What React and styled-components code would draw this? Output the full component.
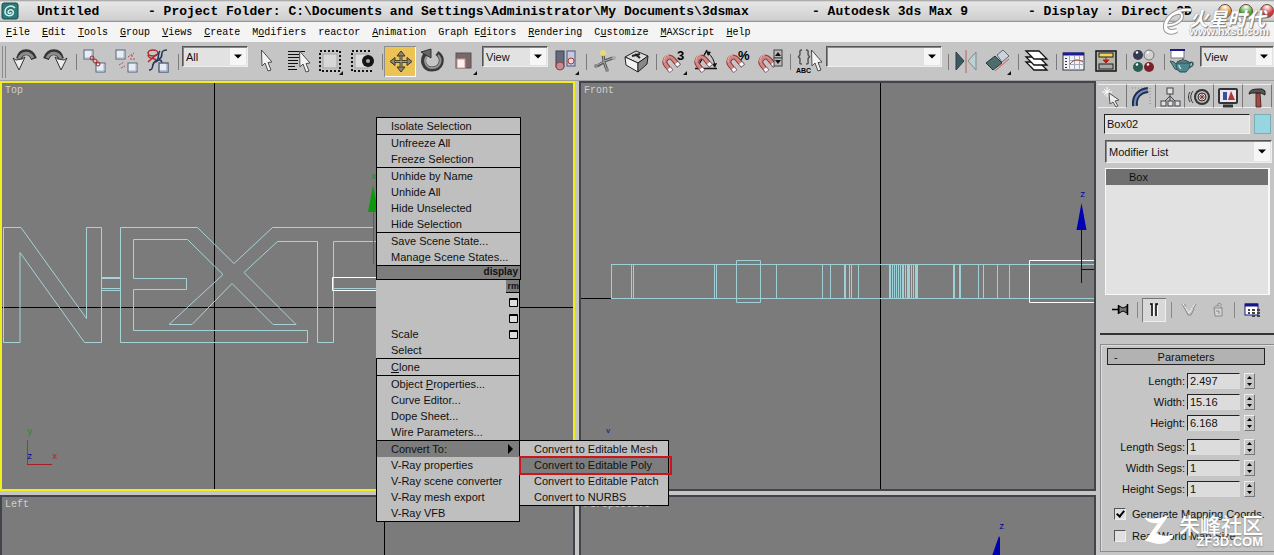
import { useState } from "react";
import styled, { createGlobalStyle } from "styled-components";

const MENUS = [
  ["", "F", "ile"],
  ["", "E", "dit"],
  ["", "T", "ools"],
  ["", "G", "roup"],
  ["", "V", "iews"],
  ["", "C", "reate"],
  ["M", "o", "difiers"],
  ["reactor", "", ""],
  ["", "A", "nimation"],
  ["Graph E", "d", "itors"],
  ["", "R", "endering"],
  ["C", "u", "stomize"],
  ["", "M", "AXScript"],
  ["", "H", "elp"],
];

const DISPLAY_QUAD = [
  ["Isolate Selection"],
  ["Unfreeze All", "Freeze Selection"],
  ["Unhide by Name", "Unhide All", "Hide Unselected", "Hide Selection"],
  ["Save Scene State...", "Manage Scene States..."],
];

const CONVERT_ITEMS = [
  "Convert to Editable Mesh",
  "Convert to Editable Poly",
  "Convert to Editable Patch",
  "Convert to NURBS",
];

const SIZES = [
  ["Length", "2.497"],
  ["Width", "15.16"],
  ["Height", "6.168"],
];

const SEGMENTS = [
  ["Length Segs", "1"],
  ["Width Segs", "1"],
  ["Height Segs", "1"],
];

// vertical edges of the extruded text seen from the front
const FRONT_EDGES = [
  611, 631, 633, 714, 716, 776, 822, 830, 844, 845, 849, 851, 858, 889, 890,
  892, 894, 896, 898, 900, 902, 903, 905, 907, 908, 909, 911, 913, 915, 916,
  917, 953, 954, 959, 960, 978, 983, 997, 1009,
];

const Magnet = () => (
  <g fill="none">
    <path d="M21 20l-6-7C11 8 4 14 8 19l5 6" stroke="#7c3a3a" strokeWidth="5" />
    <path d="M20 19l-5-6C11 8 4 14 8 19l4 5" stroke="#dc8580" strokeWidth="3" />
    <path d="M11 9C8 9 5 12 6 16" stroke="#f3bdb8" />
    <path d="M18.500 17l2.500 3M11 22.500l2.500 3" stroke="#777" strokeWidth="5" />
    <path d="M18.500 17l2 2.500M11 22.500l2 2.500" stroke="#fff" strokeWidth="3.500" />
  </g>
);

const UndoShape = () => (
  <>
    <path d="M26 13C23 4 13 4 11 13" fill="none" stroke="#333" strokeWidth="6" />
    <path d="M25 12C22 6 14 5 11 13" fill="none" stroke="#8b8b8b" strokeWidth="3" />
    <path d="M5 12l3 2 6-1 3-2-6 13z" fill="#eee" stroke="#333" />
  </>
);

const Node = ({ x, y }) => (
  <>
    <rect x={x} y={y} width="9" height="9" fill="#e6edf5" stroke="#596579" />
    <path d={`M${x + 1} ${y + 8}h7v-7`} fill="none" stroke="#a9b7cc" />
  </>
);

const Arrow = ({ x = 0, y = 0 }) => (
  <path
    transform={`translate(${x} ${y})`}
    d="M11.500 4l.5 16 3-3 3 8 3-1-3-7.500 4-.5z"
    fill="#f4f4f4"
    stroke="#4c4c4c"
  />
);

const Flyout = () => <path d="M29 25v4h-4z" fill="#111" />;

const ICONS = {
  undo: <UndoShape />,
  redo: (
    <g transform="translate(32 0) scale(-1 1)">
      <UndoShape />
    </g>
  ),
  link: (
    <>
      <Node x={6} y={4} />
      <Node x={18} y={17} />
      <g fill="none" stroke="#a32626">
        <circle cx="14" cy="12" r="2" />
        <circle cx="17" cy="15" r="2" />
        <circle cx="20" cy="18" r="2" />
      </g>
    </>
  ),
  unlink: (
    <>
      <path d="M18 11l6-4M20 13h6M9 19l5-3M11 22l4-2M22 9v3" stroke="#b04c4c" strokeDasharray="2 1" />
      <Node x={6} y={4} />
      <Node x={18} y={17} />
    </>
  ),
  bind: (
    <g fill="none" strokeWidth="1.5">
      <ellipse cx="11" cy="7" rx="5" ry="3" stroke="#b02828" />
      <path d="M6 9c1 6 8 1 9 7M15 8l-9 8" stroke="#b02828" />
      <path d="M25 4c-9 0-2 7-8 9M7 24c6 0 1-6 7-9 4-2 6-1 6 3M18 5c-3 3 0 8-4 11" stroke="#26345c" />
      <Node x={17} y={17} />
    </g>
  ),
  cursor: <Arrow />,
  byName: (
    <>
      <path d="M6 5.500h17M6 8.500h11M6 11.500h13M6 14.500h10M6 17.500h10M6 20.500h7M6 23.500h9" stroke="#111" />
      <Arrow x={6} y={1} />
    </>
  ),
  region: (
    <>
      <rect x="6" y="5" width="20" height="20" fill="none" stroke="#111" strokeWidth="2" strokeDasharray="2 2" />
      <rect x="9" y="8" width="14" height="14" fill="#d7d7d7" stroke="#a4a4a4" />
      <Flyout />
    </>
  ),
  crossing: (
    <>
      <path d="M24 5H6v20h20" fill="none" stroke="#111" strokeWidth="2" strokeDasharray="2 2" />
      <rect x="9" y="8" width="13" height="14" fill="#dcdcdc" stroke="#a4a4a4" />
      <circle cx="22" cy="15" r="6" fill="#151515" />
      <circle cx="22" cy="15" r="2" fill="#aaa" />
    </>
  ),
  move: (
    <>
      <path d="M17 9v13M10 15.500h14" stroke="#4b452e" strokeWidth="3" />
      <path d="M17 5l4 5h-8zM17 26l4-5h-8zM6 15.500l5-4v8zM28 15.500l-5-4v8z" fill="#8a8570" stroke="#3c3826" />
      <path d="M17 10v11M11 15.500h12" stroke="#a39c83" />
    </>
  ),
  rotate: (
    <>
      <path d="M21 7c8 6 4 16-5 16-8 0-11-9-6-15" fill="none" stroke="#3a3a3a" strokeWidth="5" />
      <path d="M22 9c5 5 2 13-6 13-6 0-9-7-5-12" fill="none" stroke="#949494" strokeWidth="2" />
      <path d="M5 6l10-3v9z" fill="#666" stroke="#333" />
    </>
  ),
  scale: (
    <>
      <rect x="8" y="7" width="15" height="15" fill="#78686b" stroke="#5b5053" />
      <rect x="9" y="13" width="8" height="9" fill="#fff0eb" stroke="#c59a94" />
      <Flyout />
    </>
  ),
  pivot: (
    <>
      <rect x="6" y="5" width="8" height="16" fill="#666b7c" stroke="#3c4152" />
      <circle cx="10" cy="20" r="4" fill="#c78b93" stroke="#8d3f4a" />
      <rect x="17" y="5" width="8" height="15" fill="#c3cbdc" stroke="#4a5580" />
      <circle cx="21" cy="15" r="3" fill="#f3d7d7" stroke="#ad3434" />
      <Flyout />
    </>
  ),
  manipulate: (
    <>
      <path d="M15 8l1 8-7 4M16 15l9-3M16 16l3 8" fill="none" stroke="#555" strokeWidth="3" />
      <path d="M15 8l1 8-7 3M16 15l9-3M16 16l3 8" fill="none" stroke="#aaa" />
      <circle cx="15" cy="7" r="3" fill="#e6dc73" />
      <circle cx="8" cy="20" r="2" fill="#888" />
      <circle cx="26" cy="12" r="2" fill="#aaa" />
      <circle cx="19" cy="24" r="2" fill="#888" />
    </>
  ),
  keyboard: (
    <g stroke="#222">
      <path d="M5 11l11-6 12 5-10 7z" fill="#ddd" />
      <path d="M5 11l13 6v9L6 19z" fill="#f4f4f4" />
      <path d="M18 17l10-7-1 8-9 8z" fill="#888" />
      <path d="M12 10l8-2M15 8l5 4" strokeWidth="2" />
    </g>
  ),
  snap3: (
    <>
      <Magnet />
      <text x="19" y="14">3</text>
      <Flyout />
    </>
  ),
  angle: (
    <>
      <path d="M5 22.500h22M8 20L17 4" fill="none" stroke="#111" strokeWidth="1.5" />
      <path d="M18 7c4 3 6 7 7 13" fill="none" stroke="#111" />
      <path d="M16 5l5 1-3 4zM22 18l5-1-2 5z" fill="#111" />
      <Magnet />
    </>
  ),
  percent: (
    <>
      <Magnet />
      <text x="16" y="14">%</text>
    </>
  ),
  spinner: (
    <>
      <Magnet />
      <rect x="20" y="4" width="8" height="8" fill="#bbb" stroke="#444" />
      <rect x="20" y="12" width="8" height="8" fill="#bbb" stroke="#444" />
      <path d="M21 10l3-4 3 4zM21 14h6l-3 4z" fill="#111" />
    </>
  ),
  named: (
    <>
      <g fill="none" stroke="#555" strokeWidth="1.5">
        <path d="M10 4c-3 0-2 2-2 4s-2 3-2 3 2 0 2 3-1 4 2 4M14 4c3 0 2 2 2 4s2 3 2 3-2 0-2 3 1 4-2 4" />
      </g>
      <text x="4" y="27" className="small">ABC</text>
      <Arrow x={8} />
    </>
  ),
  mirror: (
    <>
      <path d="M6 6l8 9-8 9z" fill="#3d5960" stroke="#2c3c40" />
      <path d="M26 6l-8 9 8 9z" fill="#bdd0d3" stroke="#7c8a8d" />
      <path d="M16 4v23" stroke="#b4645f" />
    </>
  ),
  align: (
    <>
      <path d="M4 17l9-7 7 7-9 7z" fill="#4c6c70" stroke="#263638" />
      <path d="M15 9l6-5 6 6-7 6z" fill="#ccd3dd" stroke="#62676e" />
      <path d="M13 25l14-12" stroke="#cf5c5c" />
      <Flyout />
    </>
  ),
  layers: (
    <g fill="#fff" stroke="#111" strokeWidth="1.3">
      <path d="M6 16h13l8 8H14z" />
      <path d="M6 11h13l8 8H14z" />
      <path d="M6 5h13l8 8H14z" />
    </g>
  ),
  curve: (
    <>
      <rect x="5" y="7" width="21" height="17" fill="#f2f2f2" stroke="#333a50" />
      <path d="M5 8h21" stroke="#1c1c9c" strokeWidth="3" />
      <path d="M11.500 9v15M11 14.500h15M11 18.500h15M16.500 10v14M21.500 10v14" stroke="#a4aabb" />
      <path d="M12 18c4-5 8-5 13-2" fill="none" stroke="#b23a3a" />
      <path d="M7 12.500h2M7 15.500h2M7 18.500h2M7 21.500h2" stroke="#333" />
    </>
  ),
  schematic: (
    <>
      <rect x="6" y="5" width="20" height="20" fill="#b5b5a9" stroke="#111" strokeWidth="1.5" />
      <rect x="9" y="7" width="14" height="4" fill="#efd55a" stroke="#222" />
      <rect x="9" y="18" width="14" height="5" fill="#a9a9a9" stroke="#222" />
      <path d="M16 11v5M13 14h6l-3 3z" fill="#b22020" stroke="#b22020" />
    </>
  ),
  material: (
    <>
      <circle cx="10" cy="9" r="5" fill="#333a52" />
      <circle cx="21" cy="9" r="5" fill="#d2d2d2" stroke="#777" />
      <circle cx="10" cy="21" r="5" fill="#285e54" />
      <circle cx="21" cy="21" r="5" fill="#7e2027" />
      <path d="M8 7l2-1M19 7l2-1M8 19l2-1M19 19l2-1" stroke="#fff" strokeWidth="2" />
    </>
  ),
  render: (
    <>
      <rect x="5" y="4" width="13" height="8" fill="#fff" stroke="#777" />
      <path d="M4 4h15" stroke="#1b1b90" strokeWidth="2" />
      <path d="M23 17c4-2 5 1 3 3l-3 2" fill="none" stroke="#2b545a" strokeWidth="1.5" />
      <path d="M11 19l-3-3-4-1 5 8 3 1z" fill="#5b939a" stroke="#2b545a" />
      <path d="M10 17h14c0 5-2 7-4 9h-6c-3-2-4-4-4-9z" fill="#4d868d" stroke="#274e54" />
      <path d="M11 16q6-4 12 0zM17 12v2" fill="#86b8bd" stroke="#274e54" />
      <path d="M13 19c0 2 1 3 2 4" fill="none" stroke="#b8dde0" strokeWidth="1.5" />
    </>
  ),
};

const TABS = {
  Create: (
    <>
      <path d="M9 2v10M4 7h10M6 4l6 6M12 4l-6 6" stroke="#fff" />
      <path d="M11 8l1 11 3-2 3 5 2-1-3-5 4-1z" fill="#eee" stroke="#555" />
    </>
  ),
  Modify: (
    <>
      <path d="M5 3h18v18" fill="none" stroke="#888" strokeDasharray="1 2" />
      <path d="M8 21C7 12 12 6 21 5" fill="none" stroke="#202d4e" strokeWidth="6" />
      <path d="M8 21C7 12 12 6 21 5" fill="none" stroke="#7390bd" strokeWidth="2" />
    </>
  ),
  Hierarchy: (
    <>
      <path d="M14 9v7M14 11l-6 6M14 11l6 6" stroke="#444" fill="none" />
      <g fill="#dce2e8" stroke="#444">
        <rect x="11" y="3" width="6" height="6" />
        <rect x="5" y="16" width="5" height="5" />
        <rect x="12" y="16" width="5" height="5" />
        <rect x="19" y="16" width="5" height="5" />
      </g>
    </>
  ),
  Motion: (
    <g fill="none" stroke="#333">
      <circle cx="17" cy="12" r="7" strokeWidth="2" fill="#bbb" />
      <circle cx="17" cy="12" r="4" fill="#eee" />
      <path d="M17 8v8M13 12h8M14 9l6 6M20 9l-6 6" stroke="#7c3b3b" />
      <path d="M8 6c-3 4-3 8 0 12M5 7c-2 3-2 7 0 10" />
    </g>
  ),
  Display: (
    <>
      <rect x="5" y="4" width="18" height="14" rx="1" fill="#e8e8f2" stroke="#343434" strokeWidth="2" />
      <path d="M9 7h4v8H9z" fill="#3c4f9b" />
      <path d="M14 15l3-9 4 9z" fill="#b63434" />
      <path d="M9 21h10" stroke="#343434" strokeWidth="3" />
    </>
  ),
  Utilities: (
    <>
      <path d="M13 8h4l1 14h-5z" fill="#a34a42" stroke="#542a26" />
      <path d="M6 9c1-5 5-5 13-5l3 2v4l-4-2H9z" fill="#555" stroke="#222" />
    </>
  ),
};

function ToolIcon({ name, active }) {
  return (
    <ToolButton type="button" aria-label={name} $active={active}>
      <svg width="32" height="31" viewBox="0 0 32 31">
        {ICONS[name]}
      </svg>
    </ToolButton>
  );
}

function DropDown({ label, value, width, tall }) {
  return (
    <DropWrap $width={width} $tall={tall}>
      <DropSelect aria-label={label} defaultValue={value}>
        <option>{value}</option>
      </DropSelect>
      <DropArrow viewBox="0 0 16 16" preserveAspectRatio="xMidYMid meet">
        <path d="M4 6h8l-4 4z" fill="#000" />
      </DropArrow>
    </DropWrap>
  );
}

function Spinner({ label, value }) {
  const id = label.replace(" ", "-").toLowerCase();
  return (
    <SpinnerRow>
      <label htmlFor={id}>{label}:</label>
      <NumberField id={id} defaultValue={value} />
      <Stepper>
        <StepButton type="button" aria-label={`${label} up`}>
          <svg width="5" height="3">
            <path d="M0 3h5L2.500 0z" />
          </svg>
        </StepButton>
        <StepButton type="button" aria-label={`${label} down`}>
          <svg width="5" height="3">
            <path d="M0 0h5L2.500 3z" />
          </svg>
        </StepButton>
      </Stepper>
    </SpinnerRow>
  );
}

function OptionBox() {
  return (
    <svg width="9" height="9">
      <path d="M.5.5h8v8h-8zM0 1.500h9" fill="#ddd" stroke="#000" />
    </svg>
  );
}

function Quads() {
  const [target, setTarget] = useState("Convert to Editable Poly");

  return (
    <QuadLayer>
      <Quad>
        {DISPLAY_QUAD.map((items) => (
          <QuadSection key={items[0]}>
            {items.map((item) => (
              <QuadItem key={item}>{item}</QuadItem>
            ))}
          </QuadSection>
        ))}
        <QuadTitle>display</QuadTitle>
      </Quad>
      <LowerQuad>
        <TransformHead>
          <span>rm</span>
        </TransformHead>
        <QuadSection $open>
          <QuadItem aria-label="Move">
            <i />
            <OptionBox />
          </QuadItem>
          <QuadItem aria-label="Rotate">
            <i />
            <OptionBox />
          </QuadItem>
          <QuadItem>
            Scale
            <OptionBox />
          </QuadItem>
          <QuadItem>Select</QuadItem>
        </QuadSection>
        <QuadSection>
          <QuadItem>
            <span>
              <u>C</u>lone
            </span>
          </QuadItem>
        </QuadSection>
        <QuadSection>
          <QuadItem>
            <span>
              Object <u>P</u>roperties...
            </span>
          </QuadItem>
          <QuadItem>Curve Editor...</QuadItem>
          <QuadItem>Dope Sheet...</QuadItem>
          <QuadItem>Wire Parameters...</QuadItem>
        </QuadSection>
        <QuadSection>
          <SubAnchor>
            <QuadItem $active>
              Convert To:
              <svg width="11" height="10">
                <path d="M1 0v10l5-5z" />
              </svg>
            </QuadItem>
            <SubMenu>
              {CONVERT_ITEMS.map((item) => (
                <SubRow key={item} $marked={item === target}>
                  <QuadItem $active={item === target} onClick={() => setTarget(item)}>
                    {item}
                  </QuadItem>
                </SubRow>
              ))}
            </SubMenu>
          </SubAnchor>
          <QuadItem>V-Ray properties</QuadItem>
          <QuadItem>V-Ray scene converter</QuadItem>
          <QuadItem>V-Ray mesh export</QuadItem>
          <QuadItem>V-Ray VFB</QuadItem>
        </QuadSection>
      </LowerQuad>
    </QuadLayer>
  );
}

function Viewports() {
  return (
    <ViewGrid>
      <Viewport $active>
        <ViewName>Top</ViewName>
        <Scene viewBox="2 83 571 406" preserveAspectRatio="xMinYMin slice">
          <path d="M214.500 80v420M0 307.500h580" stroke="#000" />
          <g fill="none" stroke="#a6d3d8">
            <path d="M3.500 227.500h17.500l65.500 91v-91h15v115h-17l-64.500-90v90h-16.500z" />
            <path d="M373 227.500H272.500L234 263.500l-36.500-36h-77v115h187v-12h-174v-41h53v-11h-53v-39h54l35.500 35-54 50h23l40-41 41 41h23l-52-52 33.500-31h40v101h16v-101H376" />
            <path d="M101 277.500h19M101 278.500h19M101 288.500h19M101 290.500h19M333 288.500h44" />
          </g>
          <path d="M377 277.500h-44.500v13h44.500" fill="none" stroke="#fff" />
          <path d="M373 185l5 27h-10z" fill="#0a9a0a" />
          <path d="M373.500 212v52" stroke="#1c8a1c" />
          <path d="M27.500 440v25" stroke="#18801d" />
          <path d="M27 464.500h25" stroke="#a81c24" />
          <text x="27" y="434" fill="#18901d">y</text>
          <text x="27" y="459" fill="#000099">z</text>
          <text x="52" y="459" fill="#b01c24">x</text>
          <text x="371" y="179" fill="#18901d">x</text>
        </Scene>
      </Viewport>
      <Viewport>
        <ViewName>Front</ViewName>
        <Scene viewBox="581 83 513 406" preserveAspectRatio="xMinYMin slice">
          <path d="M880.500 80v420M580 298.500h31" stroke="#000" />
          <g fill="none" stroke="#9fd0d6">
            <path d="M1096 264.500H611M611 298.500h485" />
            <path d="M736.500 260.500h24v42h-24z" />
            {FRONT_EDGES.map((x) => (
              <path key={x} d={`M${x}.5 264v34`} />
            ))}
          </g>
          <path d="M1100 260.500h-70.500v42h70.500" fill="none" stroke="#fff" />
          <path d="M1081.500 203l5 27h-10z" fill="#0000b4" />
          <path d="M1081.500 230v53M1081 269.500h15" stroke="#0000a0" />
          <text x="1080" y="197" fill="#0000a0">z</text>
          <text x="606" y="433" fill="#0000a0" className="faint">v</text>
        </Scene>
      </Viewport>
      <Viewport $clipped>
        <ViewName>Left</ViewName>
        <Scene viewBox="2 497 571 58" preserveAspectRatio="xMinYMin slice">
          <path d="M384.500 490v400" stroke="#000" />
        </Scene>
      </Viewport>
      <Viewport $clipped>
        <ViewName>Perspective</ViewName>
        <Scene viewBox="581 497 513 58" preserveAspectRatio="xMinYMin slice">
          <path d="M999 536l1 2v18h-8z" fill="#0000b4" />
          <text x="999" y="529" fill="#0000a0">z</text>
        </Scene>
      </Viewport>
    </ViewGrid>
  );
}

function CommandPanel() {
  return (
    <Panel>
      <Tabs>
        {Object.keys(TABS).map((name) => (
          <Tab key={name} type="button" aria-label={name} $active={name === "Modify"}>
            <svg width="28" height="24">{TABS[name]}</svg>
          </Tab>
        ))}
      </Tabs>
      <ObjectRow>
        <NameField aria-label="Object name" defaultValue="Box02" />
        <Swatch type="button" aria-label="Object color" />
      </ObjectRow>
      <DropDown label="Modifier List" value="Modifier List" tall />
      <Stack>
        <StackItem>Box</StackItem>
      </Stack>
      <StackTools>
        <StackButton type="button" aria-label="Pin stack">
          <svg width="24" height="24">
            <path d="M4 11.500h6M10.500 7v9M19.500 6v11" stroke="#000" strokeWidth="1.500" />
            <path d="M11 8l4 2 4-2v7l-4-2-4 2z" fill="#777" stroke="#000" />
          </svg>
        </StackButton>
        <StackLine />
        <StackButton type="button" aria-label="Show end result" $active>
          <svg width="22" height="22">
            <path d="M7 5h2v12M15 5h-2v12" fill="none" stroke="#000" strokeWidth="1.500" />
            <path d="M10.500 5v12M14.500 7v10" stroke="#fff" />
          </svg>
        </StackButton>
        <StackLine />
        <StackButton type="button" aria-label="Make unique">
          <svg width="24" height="24">
            <path d="M5 6l3 5M8 6v3M19 6l-3 5M8 11l3 6h3l3-6" fill="none" stroke="#888" />
            <path d="M6 6l6 9 6-9" fill="none" stroke="#fff" strokeDasharray="2 1" />
          </svg>
        </StackButton>
        <StackButton type="button" aria-label="Remove modifier">
          <svg width="24" height="24">
            <path d="M8 10h8v8H9zM8 10c1-3 7-3 8 0M11 8l2-3 3 2M10 13h3v3" fill="#d5d5d5" stroke="#888" />
          </svg>
        </StackButton>
        <StackLine />
        <StackButton type="button" aria-label="Configure modifier sets">
          <svg width="24" height="24">
            <rect x="5" y="6" width="13" height="11" fill="#fff" stroke="#16168a" />
            <path d="M5 7h13" stroke="#16168a" strokeWidth="3" />
            <path d="M8 12h2M8 15h2M12 12h3M17 12h3M12 15h3M17 15h3M12 18h3M17 18h3" stroke="#444" strokeWidth="2" />
          </svg>
        </StackButton>
      </StackTools>
      <Rollout>
        <RolloutFrame>
          <RolloutHead type="button">
            <span>-</span>
            Parameters
          </RolloutHead>
          <SpinnerGroup>
            {SIZES.map(([label, value]) => (
              <Spinner key={label} label={label} value={value} />
            ))}
          </SpinnerGroup>
          <SpinnerGroup>
            {SEGMENTS.map(([label, value]) => (
              <Spinner key={label} label={label} value={value} />
            ))}
          </SpinnerGroup>
          <Checks>
            <CheckLabel>
              <CheckBox type="checkbox" defaultChecked />
              Generate Mapping Coords.
            </CheckLabel>
            <CheckLabel>
              <CheckBox type="checkbox" />
              Real-World Map Size
            </CheckLabel>
          </Checks>
        </RolloutFrame>
      </Rollout>
      <ForumMark>
        <svg width="36" height="34">
          <path d="M3 4c9 4 16 1 25-2L15 20c5 3 11 4 18 1-3 7-8 10-15 10-5 0-9-3-14-3L17 10C11 11 6 9 3 4z" fill="#fff" />
        </svg>
        <div>
          <strong>朱峰社区</strong>
          <em>ZF3D.COM</em>
        </div>
      </ForumMark>
    </Panel>
  );
}

export default function App() {
  return (
    <Window>
      <GlobalStyle />
      <TitleBar>
        <svg width="18" height="18">
          <rect x="1" y="1" width="16" height="16" rx="2" fill="#2d7a78" stroke="#174c4c" />
          <path d="M14 6C10 2 4 5 4 10c0 4 6 5 8 2 2-4-4-6-5-2 0 2 3 2 3 0" fill="none" stroke="#d3f0ec" strokeWidth="1.500" />
        </svg>
        <TitlePart $basis={111}>Untitled</TitlePart>
        <TitlePart $basis={664}>
          - Project Folder: C:\Documents and Settings\Administrator\My Documents\3dsmax
        </TitlePart>
        <TitlePart $basis={216}>- Autodesk 3ds Max 9</TitlePart>
        <TitlePart $basis={188}>- Display : Direct 3D</TitlePart>
        <WindowButtons>
          <Orb type="button" aria-label="Minimize" $color="#e98a1c" />
          <Orb type="button" aria-label="Maximize" $color="#4da52c" />
          <Orb type="button" aria-label="Close" $color="#d3373c" />
        </WindowButtons>
        <SiteMark>
          <svg width="36" height="28">
            <path d="M5 17c8 1 16-4 16-9 0-6-10-3-14 4-5 8 0 13 9 10M30 2C14 0 3 11 4 20c1 5 7 6 12 3" fill="none" stroke="#999" strokeWidth="4" />
            <path d="M5 17c8 1 16-4 16-9 0-6-10-3-14 4-5 8 0 13 9 10M30 2C14 0 3 11 4 20c1 5 7 6 12 3" fill="none" stroke="#fff" strokeWidth="2" />
          </svg>
          <div>
            <strong>火星时代</strong>
            <span>www.hxsd.com</span>
          </div>
        </SiteMark>
      </TitleBar>
      <MenuBar>
        {MENUS.map(([before, key, after]) => (
          <MenuButton key={before + key + after} type="button">
            {before}
            <u>{key}</u>
            {after}
          </MenuButton>
        ))}
      </MenuBar>
      <ToolBar>
        <Grip />
        <ToolIcon name="undo" />
        <ToolIcon name="redo" />
        <Separator />
        <ToolIcon name="link" />
        <ToolIcon name="unlink" />
        <ToolIcon name="bind" />
        <Separator />
        <DropDown label="Selection filter" value="All" width="66px" />
        <ToolIcon name="cursor" />
        <ToolIcon name="byName" />
        <ToolIcon name="region" />
        <ToolIcon name="crossing" />
        <Separator />
        <ToolIcon name="move" active />
        <ToolIcon name="rotate" />
        <ToolIcon name="scale" />
        <DropDown label="Reference coordinates" value="View" width="66px" />
        <ToolIcon name="pivot" />
        <Separator />
        <ToolIcon name="manipulate" />
        <ToolIcon name="keyboard" />
        <Separator />
        <ToolIcon name="snap3" />
        <ToolIcon name="angle" />
        <ToolIcon name="percent" />
        <ToolIcon name="spinner" />
        <Separator />
        <ToolIcon name="named" />
        <DropDown label="Named selection sets" value="" width="116px" />
        <Separator />
        <ToolIcon name="mirror" />
        <ToolIcon name="align" />
        <Separator />
        <ToolIcon name="layers" />
        <Separator />
        <ToolIcon name="curve" />
        <ToolIcon name="schematic" />
        <Separator />
        <ToolIcon name="material" />
        <Separator />
        <ToolIcon name="render" />
        <DropDown label="Render type" value="View" />
      </ToolBar>
      <Workspace>
        <Viewports />
        <CommandPanel />
        <Quads />
      </Workspace>
    </Window>
  );
}

const GlobalStyle = createGlobalStyle`
  * {
    box-sizing: border-box;
  }

  body {
    margin: 0;
    overflow: hidden;
    font: 11px "Liberation Sans", Arial, "Noto Sans CJK SC", sans-serif;
    color: #111;
  }

  button,
  input,
  select {
    margin: 0;
    padding: 0;
    border: 0;
    border-radius: 0;
    font: inherit;
    color: inherit;
  }

  svg {
    display: block;
    flex: none;
  }
`;

const Window = styled.div`
  display: flex;
  flex-direction: column;
  height: 100vh;
  background: #c5c5c5;
`;

const TitleBar = styled.header`
  position: relative;
  display: flex;
  align-items: center;
  flex: none;
  height: 22px;
  padding-left: 1px;
  background: linear-gradient(#9a9a9a, #e6e6e6 2px, #cfcfcf 20px, #858585);
`;

const TitlePart = styled.span`
  flex: 0 0 ${({ $basis }) => $basis}px;
  font: bold 13px "Liberation Mono", monospace;
  color: #000;
  white-space: nowrap;

  svg + & {
    margin-left: 18px;
  }
`;

const WindowButtons = styled.div`
  display: flex;
  gap: 7px;
  margin-left: auto;
`;

const Orb = styled.button`
  width: 14px;
  height: 14px;
  border: 1px solid #6b4a3a;
  border-radius: 50%;
  background: radial-gradient(circle at 50% 15%, #fff, ${({ $color }) => $color} 60%);
`;

const SiteMark = styled.div`
  position: absolute;
  z-index: 2;
  top: 8px;
  right: 5px;
  display: flex;
  color: #fff;
  text-shadow: 1px 1px 1px #777, 0 0 1px #777;
  pointer-events: none;

  div {
    display: flex;
    flex-direction: column;
    margin-left: -8px;
    padding-top: 2px;
  }

  strong {
    font: italic bold 19px/16px "Noto Sans CJK SC", sans-serif;
  }

  span {
    font: bold 11px/10px "Liberation Sans", sans-serif;
  }
`;

const MenuBar = styled.nav`
  display: flex;
  flex: none;
  gap: 12px;
  height: 20px;
  padding-left: 6px;
  background: #f4f4f4;
`;

const MenuButton = styled.button`
  flex: none;
  background: none;
  font: 10px "Liberation Mono", monospace;
  color: #000;
`;

const ToolBar = styled.div`
  display: flex;
  align-items: flex-start;
  flex: none;
  height: 39px;
  padding-top: 4px;
  background: #c5c5c5;
  border-bottom: 1px solid #a0a0a0;
`;

const Grip = styled.div`
  flex: none;
  width: 4px;
  height: 32px;
  margin: 0 2px;
  border: 1px solid #8a8a8a;
  border-width: 0 1px;
`;

const ToolButton = styled.button`
  flex: none;
  width: 32px;
  height: 31px;
  background: ${({ $active }) => ($active ? "#edc355" : "none")};
  box-shadow: ${({ $active }) => ($active ? "inset 1px 1px #8f8f8f, inset -1px -1px #fff" : "none")};

  text {
    font: bold 13px "Liberation Sans", sans-serif;
  }

  text.small {
    font-size: 7px;
  }
`;

const Separator = styled.div`
  flex: none;
  width: 1px;
  height: 16px;
  margin: 8px 1px 0 4px;
  background: #7b7b7b;
`;

const DropWrap = styled.div`
  position: relative;
  flex: ${({ $width, $tall }) => ($tall ? "none" : $width ? `0 0 ${$width}` : "1 1 0")};
  height: ${({ $tall }) => ($tall ? 23 : 21)}px;
  margin: ${({ $tall }) => ($tall ? "0 2px 0 9px" : "0 2px")};
  border: 1px solid;
  border-color: #555 #eee #eee #555;
  background: #e2e2e2;
  box-shadow: inset 1px 1px #888;

  &:last-child {
    margin-right: 0;
  }
`;

const DropSelect = styled.select`
  width: 100%;
  height: 100%;
  padding-left: 3px;
  appearance: none;
  background: none;
`;

const DropArrow = styled.svg`
  position: absolute;
  top: 1px;
  right: 1px;
  width: 16px;
  height: calc(100% - 2px);
  background: #f6f6f6;
  pointer-events: none;
`;

const Workspace = styled.main`
  position: relative;
  display: flex;
  flex: 1;
  min-height: 0;
`;

const ViewGrid = styled.section`
  display: grid;
  flex: 1;
  grid-template-columns: 575fr 517fr;
  grid-template-rows: 410fr 60fr;
  gap: 4px;
  min-width: 0;
`;

const Viewport = styled.div`
  position: relative;
  min-width: 0;
  min-height: 0;
  overflow: hidden;
  border: 2px solid ${({ $active }) => ($active ? "#f2ee1c" : "#41444a")};
  border-bottom-width: ${({ $clipped }) => ($clipped ? 0 : 2)}px;
  background: #7b7b7b;
`;

const ViewName = styled.span`
  position: absolute;
  top: 2px;
  left: 3px;
  font: 10px "Liberation Mono", monospace;
  color: #d0d0d0;
`;

const Scene = styled.svg`
  width: 100%;
  height: 100%;

  text {
    font: 9px "Liberation Mono", monospace;
  }

  .faint {
    font-size: 7px;
  }
`;

const QuadLayer = styled.div`
  position: absolute;
  top: 36px;
  left: 376px;
  color: #111;
`;

const Quad = styled.div`
  width: 145px;
  border: 1px solid #000;
  border-top: 0;
`;

const LowerQuad = styled.div`
  width: 144px;
  border-right: 1px solid #000;
  border-bottom: 1px solid #000;
`;

const QuadSection = styled.div`
  border-top: 1px solid ${({ $open }) => ($open ? "#bfbfbf" : "#000")};
  background: #bfbfbf;

  ${LowerQuad} > & {
    border-left: 1px solid ${({ $open }) => ($open ? "#bfbfbf" : "#000")};
  }
`;

const QuadItem = styled.button`
  display: flex;
  align-items: center;
  justify-content: space-between;
  width: 100%;
  height: 16px;
  padding: 0 1px 0 14px;
  background: ${({ $active }) => ($active ? "#7d7d7d" : "none")};
  white-space: nowrap;
`;

const QuadTitle = styled.div`
  height: 14px;
  padding-right: 2px;
  border-top: 1px solid #000;
  background: #7d7d7d;
  font-size: 10px;
  font-weight: bold;
  line-height: 12px;
  text-align: right;
`;

const TransformHead = styled.div`
  display: flex;
  justify-content: flex-end;
  height: 13px;
  background: #bfbfbf;

  span {
    width: 13px;
    background: #7d7d7d;
    border-bottom: 1px solid #000;
    font-size: 9px;
    font-weight: bold;
    line-height: 12px;
    text-align: right;
  }
`;

const SubAnchor = styled.div`
  position: relative;
`;

const SubMenu = styled.div`
  position: absolute;
  top: -1px;
  left: 142px;
  width: 150px;
  border: 1px solid #000;
  background: #bfbfbf;
`;

const SubRow = styled.div`
  position: relative;

  &::after {
    content: ${({ $marked }) => ($marked ? '""' : "none")};
    position: absolute;
    inset: -1px -4px -2px -1px;
    border: 2px solid #c8161c;
    pointer-events: none;
  }
`;

const Panel = styled.aside`
  position: relative;
  display: flex;
  flex-direction: column;
  flex: none;
  width: 178px;
  overflow: hidden;
  background: #c5c5c5;
`;

const Tabs = styled.div`
  display: flex;
  flex: none;
  height: 27px;
  padding: 3px 0 0 2px;
`;

const Tab = styled.button`
  flex: none;
  width: 29px;
  height: 24px;
  border-top: 1px solid #eee;
  border-right: 1px solid #777;
  border-bottom: 1px solid ${({ $active }) => ($active ? "#c5c5c5" : "#eee")};
  background: none;
`;

const ObjectRow = styled.div`
  display: flex;
  flex: none;
  gap: 4px;
  margin: 6px 3px 6px 8px;
`;

const NameField = styled.input`
  flex: 1;
  min-width: 0;
  height: 20px;
  padding-left: 2px;
  border: 1px solid;
  border-color: #222 #eee #eee #222;
  background: #e2e2e2;
`;

const Swatch = styled.button`
  width: 17px;
  height: 20px;
  border: 1px solid #7badb5;
  background: #97d5e0;
`;

const Stack = styled.div`
  flex: none;
  height: 127px;
  margin: 5px 4px 0 9px;
  border: 2px solid #f8f8f8;
  border-width: 1px 2px 1px 1px;
  background: #e2e2e2;
`;

const StackItem = styled.div`
  padding-left: 23px;
  background: #707070;
  line-height: 16px;
`;

const StackTools = styled.div`
  display: flex;
  align-items: center;
  justify-content: space-between;
  flex: none;
  height: 38px;
  margin: 0 4px;
  padding: 0 6px 8px 8px;
`;

const StackButton = styled.button`
  display: flex;
  align-items: center;
  justify-content: center;
  width: 24px;
  height: 24px;
  background: ${({ $active }) => ($active ? "#d8d8d8" : "none")};
  box-shadow: ${({ $active }) => ($active ? "inset 1px 1px #777, inset -1px -1px #eee" : "none")};
`;

const StackLine = styled.div`
  width: 1px;
  height: 16px;
  background: #888;
`;

const Rollout = styled.section`
  flex: 1;
  min-height: 0;
  margin-left: 4px;
  border-top: 2px solid #333;
`;

const RolloutFrame = styled.div`
  display: flex;
  flex-direction: column;
  gap: 8px;
  height: 208px;
  margin-top: 9px;
  padding: 3px 9px 0 6px;
  border: 1px solid #8b8b8b;
  border-right: 0;
  box-shadow: inset 1px 1px #ddd;
`;

const RolloutHead = styled.button`
  position: relative;
  height: 17px;
  border: 1px solid #222;
  background: #b2b2b2;

  span {
    position: absolute;
    left: 6px;
  }
`;

const SpinnerGroup = styled.div`
  display: flex;
  flex-direction: column;
  gap: 5px;
  padding-right: 10px;
`;

const SpinnerRow = styled.div`
  display: flex;
  align-items: center;
  justify-content: flex-end;
  height: 16px;

  label {
    margin-right: 2px;
  }
`;

const NumberField = styled.input`
  width: 53px;
  height: 16px;
  margin-right: 4px;
  padding-left: 2px;
  border: 1px solid;
  border-color: #222 #ddd #ddd #222;
  background: #dcdcdc;
`;

const Stepper = styled.div`
  display: flex;
  flex-direction: column;
  width: 11px;
  height: 16px;
  border: 1px solid;
  border-color: #eee #777 #777 #eee;
`;

const StepButton = styled.button`
  display: flex;
  align-items: center;
  justify-content: center;
  flex: 1;
  background: none;
`;

const Checks = styled.div`
  display: flex;
  flex-direction: column;
  gap: 8px;
  padding: 2px 0 0 7px;
`;

const CheckLabel = styled.label`
  display: flex;
  align-items: center;
  gap: 6px;
  height: 14px;
  white-space: nowrap;
`;

const CheckBox = styled.input`
  width: 12px;
  height: 12px;
  appearance: none;
  border: 1px solid;
  border-color: #555 #eee #eee #555;
  background: #e0e0e0;

  &:checked::after {
    content: "";
    display: block;
    width: 3px;
    height: 6px;
    margin: 0 0 0 3px;
    border: solid #000;
    border-width: 0 2px 2px 0;
    transform: rotate(40deg);
  }
`;

const ForumMark = styled.div`
  position: absolute;
  right: 11px;
  bottom: 7px;
  display: flex;
  gap: 2px;
  color: #fff;
  text-shadow: 0 1px 2px #888;
  pointer-events: none;

  div {
    display: flex;
    flex-direction: column;
  }

  strong {
    font: 500 21px/22px "Noto Sans CJK SC", sans-serif;
  }

  em {
    font: bold 13px/13px "Liberation Sans", sans-serif;
    text-align: right;
  }
`;
